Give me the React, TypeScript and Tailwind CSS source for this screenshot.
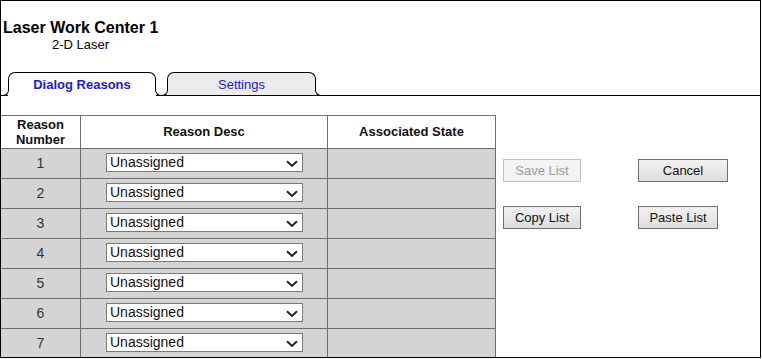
import React from 'react';

const rows = [1, 2, 3, 4, 5, 6, 7];

const Chevron = () => (
  <svg width="12" height="8" viewBox="0 0 12 8" className="absolute right-[4px] top-[6px]">
    <path d="M1 1.2 L6 6 L11 1.2" fill="none" stroke="#222" strokeWidth="1.9" />
  </svg>
);

const Select = () => (
  <div className="relative w-[197px] h-[19px] bg-white border border-[#7a7a7a] pl-[3px] text-[14px] leading-[17px] text-[#111]">
    Unassigned
    <Chevron />
  </div>
);

const Btn = ({ label, w, disabled, className }: { label: string; w: string; disabled?: boolean; className?: string }) => (
  <button
    className={
      disabled
        ? `${w} h-[23px] border border-[#c2c2c2] bg-[#f3f3f3] text-[#9c9c9c] text-[13px] leading-[21px] text-center ${className ?? ''}`
        : `${w} h-[23px] border border-[#707070] bg-gradient-to-b from-[#f2f2f2] to-[#dddddd] text-[#111] text-[13px] leading-[21px] text-center ${className ?? ''}`
    }
  >
    {label}
  </button>
);

const Tab = ({ label, active, w, className }: { label: string; active?: boolean; w: string; className?: string }) => (
  <div
    className={`relative ${w} h-[24px] -mb-px rounded-t-[7px] ${active ? 'bg-white font-bold' : 'bg-[#ececec]'} ${className ?? ''}`}
  >
    <div className="absolute left-0 right-0 top-0 bottom-[5px] border border-b-0 border-black rounded-t-[7px]" />
    {/* flared bottom corners */}
    <span className="absolute -left-[5px] bottom-0 w-[6px] h-[6px] border-r border-b border-black rounded-br-[6px]" />
    <span className="absolute -right-[5px] bottom-0 w-[6px] h-[6px] border-l border-b border-black rounded-bl-[6px]" />
    {!active && <span className="absolute left-0 right-0 bottom-0 border-b border-black" />}
    <div className="relative text-center text-[13px] leading-[15px] pt-[5px] text-[#1c1cd6]">{label}</div>
  </div>
);

export default function App() {
  return (
    <div className="w-[762px] h-[359px] bg-white overflow-hidden" style={{ fontFamily: '"Liberation Sans", Arial, sans-serif' }}>
      <div className="w-[761px] h-[358px] border border-black overflow-hidden">
        <div className="pt-[18px] pl-[2px]">
          <div className="text-[16px] leading-[18px] font-bold text-black">Laser Work Center 1</div>
          <div className="pl-[49px] text-[13px] leading-[15px] text-black">2-D Laser</div>
        </div>

        <div className="flex items-end h-[44px] border-b border-black pl-[7px]">
          <Tab label="Dialog Reasons" active w="w-[148px]" />
          <Tab label="Settings" w="w-[149px]" className="ml-[11px]" />
        </div>

        <div className="flex mt-[19px]">
          <div className="grid grid-cols-[80px_247px_168px] text-[13px]">
            <div className="h-[34px] border-t border-b border-r border-[#6f6f6f] bg-white font-bold text-center leading-[15px] pt-[1px] text-[#111]">
              Reason<br />Number
            </div>
            <div className="h-[34px] border-t border-b border-r border-[#6f6f6f] bg-white font-bold text-center leading-[32px] text-[#111]">
              Reason Desc
            </div>
            <div className="h-[34px] border-t border-b border-r border-[#6f6f6f] bg-white font-bold text-center leading-[32px] text-[#111]">
              Associated State
            </div>
            {rows.map((n) => (
              <React.Fragment key={n}>
                <div className="h-[30px] border-b border-r border-[#6f6f6f] bg-[#d4d4d4] text-center text-[14px] leading-[29px] text-[#333]">
                  {n}
                </div>
                <div className="h-[30px] border-b border-r border-[#6f6f6f] bg-[#d4d4d4] pl-[25px] pt-[4px]">
                  <Select />
                </div>
                <div className="h-[30px] border-b border-r border-[#6f6f6f] bg-[#d4d4d4]" />
              </React.Fragment>
            ))}
          </div>

          <div className="flex flex-col gap-[24px] pt-[44px] pl-[7px]">
            <div className="flex">
              <Btn label="Save List" w="w-[78px]" disabled />
              <Btn label="Cancel" w="w-[90px]" className="ml-[57px]" />
            </div>
            <div className="flex">
              <Btn label="Copy List" w="w-[78px]" />
              <Btn label="Paste List" w="w-[80px]" className="ml-[57px]" />
            </div>
          </div>
        </div>
      </div>
    </div>
  );
}
